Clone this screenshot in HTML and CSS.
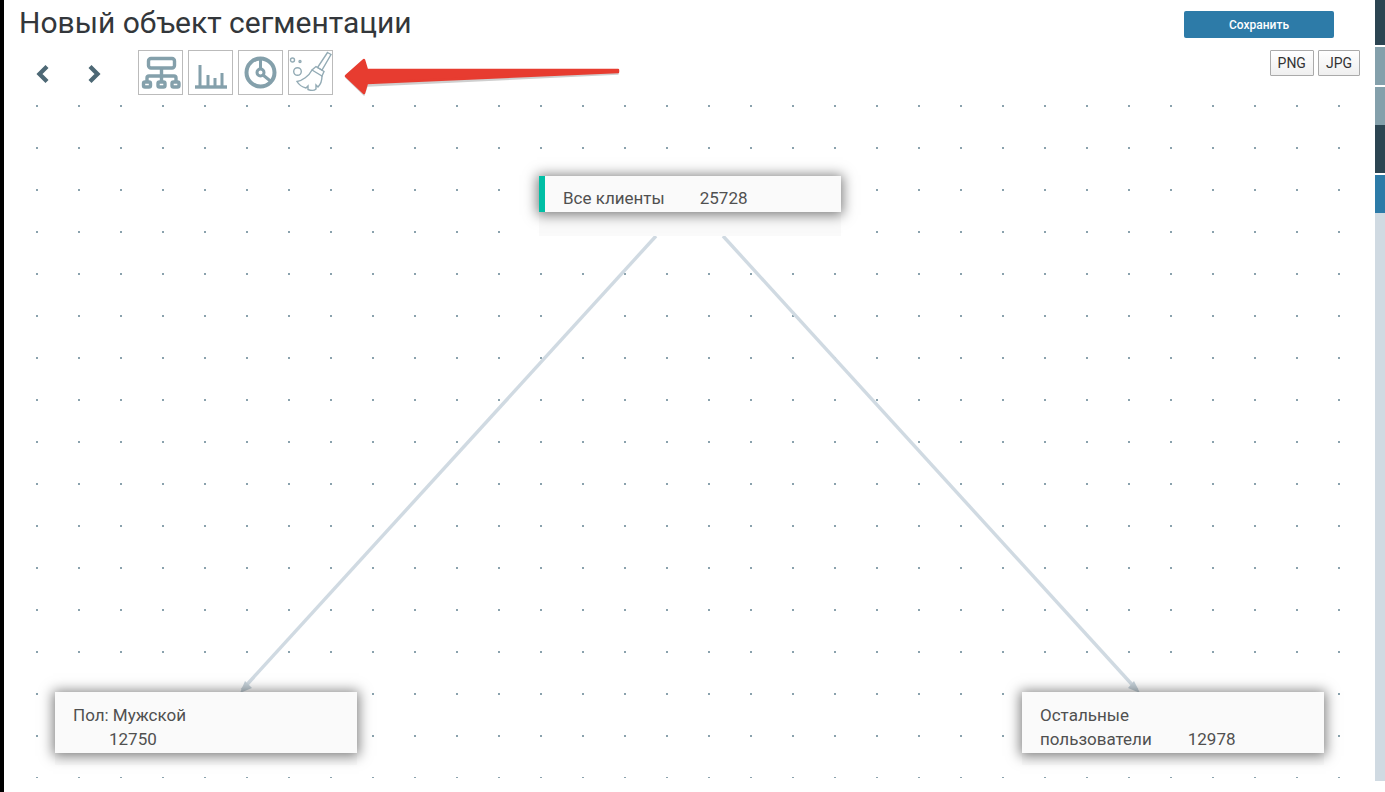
FILE: index.html
```html
<!DOCTYPE html>
<html lang="ru">
<head>
<meta charset="utf-8">
<title>Новый объект сегментации</title>
<link rel="stylesheet" href="styles.css">
</head>
<body>
<div class="page">
  <div class="edge"></div>
  <main class="main">
    <header class="header">
      <h1 class="title">Новый объект сегментации</h1>
      <button class="save" type="button">Сохранить</button>
    </header>
    <div class="toolbar">
      <div class="nav">
        <button class="nav-btn" type="button" aria-label="Назад"><svg width="14" height="20" viewBox="0 0 14 20"><path class="chev" d="M11 2.500 3.500 10 11 17.500"/></svg></button>
        <button class="nav-btn" type="button" aria-label="Вперёд"><svg width="14" height="20" viewBox="0 0 14 20"><path class="chev" d="M3 2.500 10.500 10 3 17.500"/></svg></button>
      </div>
      <div class="tools">
        <button class="tool" type="button" aria-label="Дерево"><svg width="43" height="43" viewBox="0 0 43 43"><g class="ic">
          <rect x="9.500" y="7.500" width="26" height="9.500" rx="2.500"/>
          <path d="M22.500 17V30M8 30V27a2 2 0 0 1 2-2H35a2 2 0 0 1 2 2v3"/>
          <rect x="4.500" y="31" width="7" height="5" rx="1.500"/><rect x="19" y="31" width="7" height="5" rx="1.500"/><rect x="33" y="31" width="7" height="5" rx="1.500"/>
        </g></svg></button>
        <button class="tool" type="button" aria-label="Диаграмма"><svg width="43" height="43" viewBox="0 0 43 43"><g class="ic">
          <path d="M6 36h32"/><path class="ic-bars" d="M11 14v21M19 24v11M26 27v8M33 22v13"/>
        </g></svg></button>
        <button class="tool" type="button" aria-label="Показатель"><svg width="43" height="43" viewBox="0 0 43 43"><g class="ic ic-heavy">
          <circle cx="21.500" cy="21.500" r="14"/><circle class="ic-thin" cx="21.500" cy="21.500" r="3.500"/><path class="ic-thin" d="M21.500 7v11M24 24l8 6.500"/>
        </g></svg></button>
        <button class="tool" type="button" aria-label="Очистить"><svg width="43" height="43" viewBox="0 0 43 43"><g class="ic ic-line">
          <circle cx="3.500" cy="9" r="2"/><circle cx="11" cy="10.500" r="1"/><circle cx="8.500" cy="20.500" r="3.800"/>
          <path d="M38.500 1.500 42 3.500 33 19 28.500 16.500Z"/>
          <path d="M27 15.500 35 20.500 33 25 23 19Z"/>
          <path d="M23 19C20 25 13 30 8 30.500 10 34 13 36 17 37L19 35 19 38.500C23 40 26 39 27 38L27 34 29 36C32 33 33 29 33 25"/>
        </g></svg></button>
      </div>
      <div class="export">
        <button class="exp" type="button">PNG</button>
        <button class="exp" type="button">JPG</button>
      </div>
    </div>
    <section class="canvas">
      <svg class="links" width="1306" height="673" viewBox="0 0 1306 673">
        <path class="link" d="M620 131 206 585"/>
        <path class="link" d="M687 131 1101 585"/>
        <path class="head" d="M204 588 209 576 216 583Z"/>
        <path class="head" d="M1104 588 1092 583 1098 576Z"/>
      </svg>
      <div class="node node-root"><div class="card card-root"><span class="lbl">Все клиенты</span><span class="num">25728</span></div></div>
      <div class="node node-left"><div class="card"><span class="lbl">Пол: Мужской</span><br><span class="num">12750</span></div></div>
      <div class="node node-right"><div class="card"><span class="lbl">Остальные<br>пользователи</span><span class="num">12978</span></div></div>
    </section>
  </main>
  <aside class="rail">
    <div class="seg seg-a"></div>
    <div class="seg seg-b"></div>
    <div class="seg seg-c"></div>
    <div class="seg seg-d"></div>
    <div class="seg seg-e"></div>
    <div class="seg seg-f"></div>
  </aside>
</div>
<svg class="callout" width="290" height="50" viewBox="0 0 290 50" aria-hidden="true">
  <path class="callout-shadow" d="M6 27.500 24 11 27 23 278 22 278 24 27 36 24 45Z"/>
  <path class="callout-arrow" d="M6 26 24 10 27 20 278 20 278 22 27 33 24 43Z"/>
</svg>
</body>
</html>
```
FILE: styles.css
```css
* { box-sizing: border-box; }
html, body { margin: 0; height: 100%; overflow: hidden; background: #fff; }
body { font-family: Roboto, "Liberation Sans", sans-serif; color: #333; }
.page { display: flex; height: 792px; width: 1385px; }
.edge { width: 4px; background: #000; flex: none; }
.main { flex: 1; display: flex; flex-direction: column; min-width: 0; }
.header { display: flex; justify-content: space-between; align-items: flex-start; height: 50px; padding: 11px 41px 0 15px; }
.title { margin: -5px 0 0; font-size: 30px; line-height: 34px; font-weight: 400; color: #33373b; }
.save { width: 150px; height: 27px; border: 0; border-radius: 2px; background: #2d7ba8; color: #fff; font: 500 12px Roboto, sans-serif; padding: 0; }
.toolbar { display: flex; align-items: flex-start; height: 55px; padding-right: 15px; }
.nav { display: flex; gap: 37px; padding: 14px 0 0 32px; width: 134px; }
.nav-btn { width: 14px; height: 20px; border: 0; padding: 0; background: none; display: block; }
.nav-btn svg { display: block; }
.chev { fill: none; stroke: #4d6875; stroke-width: 4.300; }
.tools { display: flex; gap: 5px; }
.tool { width: 45px; height: 45px; padding: 0; border: 1px solid #bbb; background: #fff; }
.tool svg { display: block; }
.ic { fill: none; stroke: #84a0ab; stroke-width: 3.400; }
.ic-bars { stroke-width: 3; }
.ic-heavy { stroke-width: 4; }
.ic-thin { stroke-width: 3; }
.ic-line { stroke-width: 1.400; stroke: #93abb5; }
.export { margin-left: auto; display: flex; gap: 4px; }
.exp { height: 26px; padding: 0 7px 1px; border: 1px solid #aaa; border-radius: 1px; background: linear-gradient(#fff, #efefef); font: 14px Roboto, sans-serif; color: #333; }
.canvas { position: relative; height: 673px; margin-left: 32px; width: 1306px;
  background-image: radial-gradient(circle at 1px 1px, #8aa2ad 0, #8aa2ad .9px, transparent 1.300px);
  background-size: 42px 42px; }
.links { position: absolute; left: 0; top: 0; }
.link { fill: none; stroke: #d0dae2; stroke-width: 3.400; }
.head { fill: #c6d2da; }
.node { position: absolute; width: 302px; background: #fafafa; }
.node-root { left: 503px; top: 71px; height: 60px; }
.node-left { left: 19px; top: 587px; height: 73px; }
.node-right { left: 986px; top: 587px; height: 73px; }
.card { background: #fafafa; padding: 11px 18px 0; box-shadow: 0 1px 12px 2px rgba(0,0,0,.5); font-size: 17px; line-height: 24px; color: #505050; height: 61px; }
.card-root { height: 36px; padding: 10px 24px 0 18px; border-left: 6px solid #00bfa5; }
.num { margin-left: 36px; }
.card-root .num { margin-left: 35px; }
.rail { width: 10px; flex: none; display: flex; flex-direction: column; }
.seg { flex: none; }
.seg-a { height: 45px; background: #2c4552; margin-bottom: 2px; }
.seg-b { height: 38px; background: #84a0ab; margin-bottom: 2px; }
.seg-c { height: 38px; background: #84a0ab; }
.seg-d { height: 48px; background: #2c4552; margin-bottom: 2px; }
.seg-e { height: 38px; background: #2d7ba8; }
.seg-f { height: 568px; background: #d0dae2; }
.callout { position: absolute; left: 340px; top: 50px; }
.callout-arrow { fill: #e73c30; stroke: #e73c30; stroke-width: 2.500; stroke-linejoin: round; }
.callout-shadow { fill: #bbb; stroke: #bbb; stroke-width: 1.500; stroke-linejoin: round; opacity: .7; }
```
